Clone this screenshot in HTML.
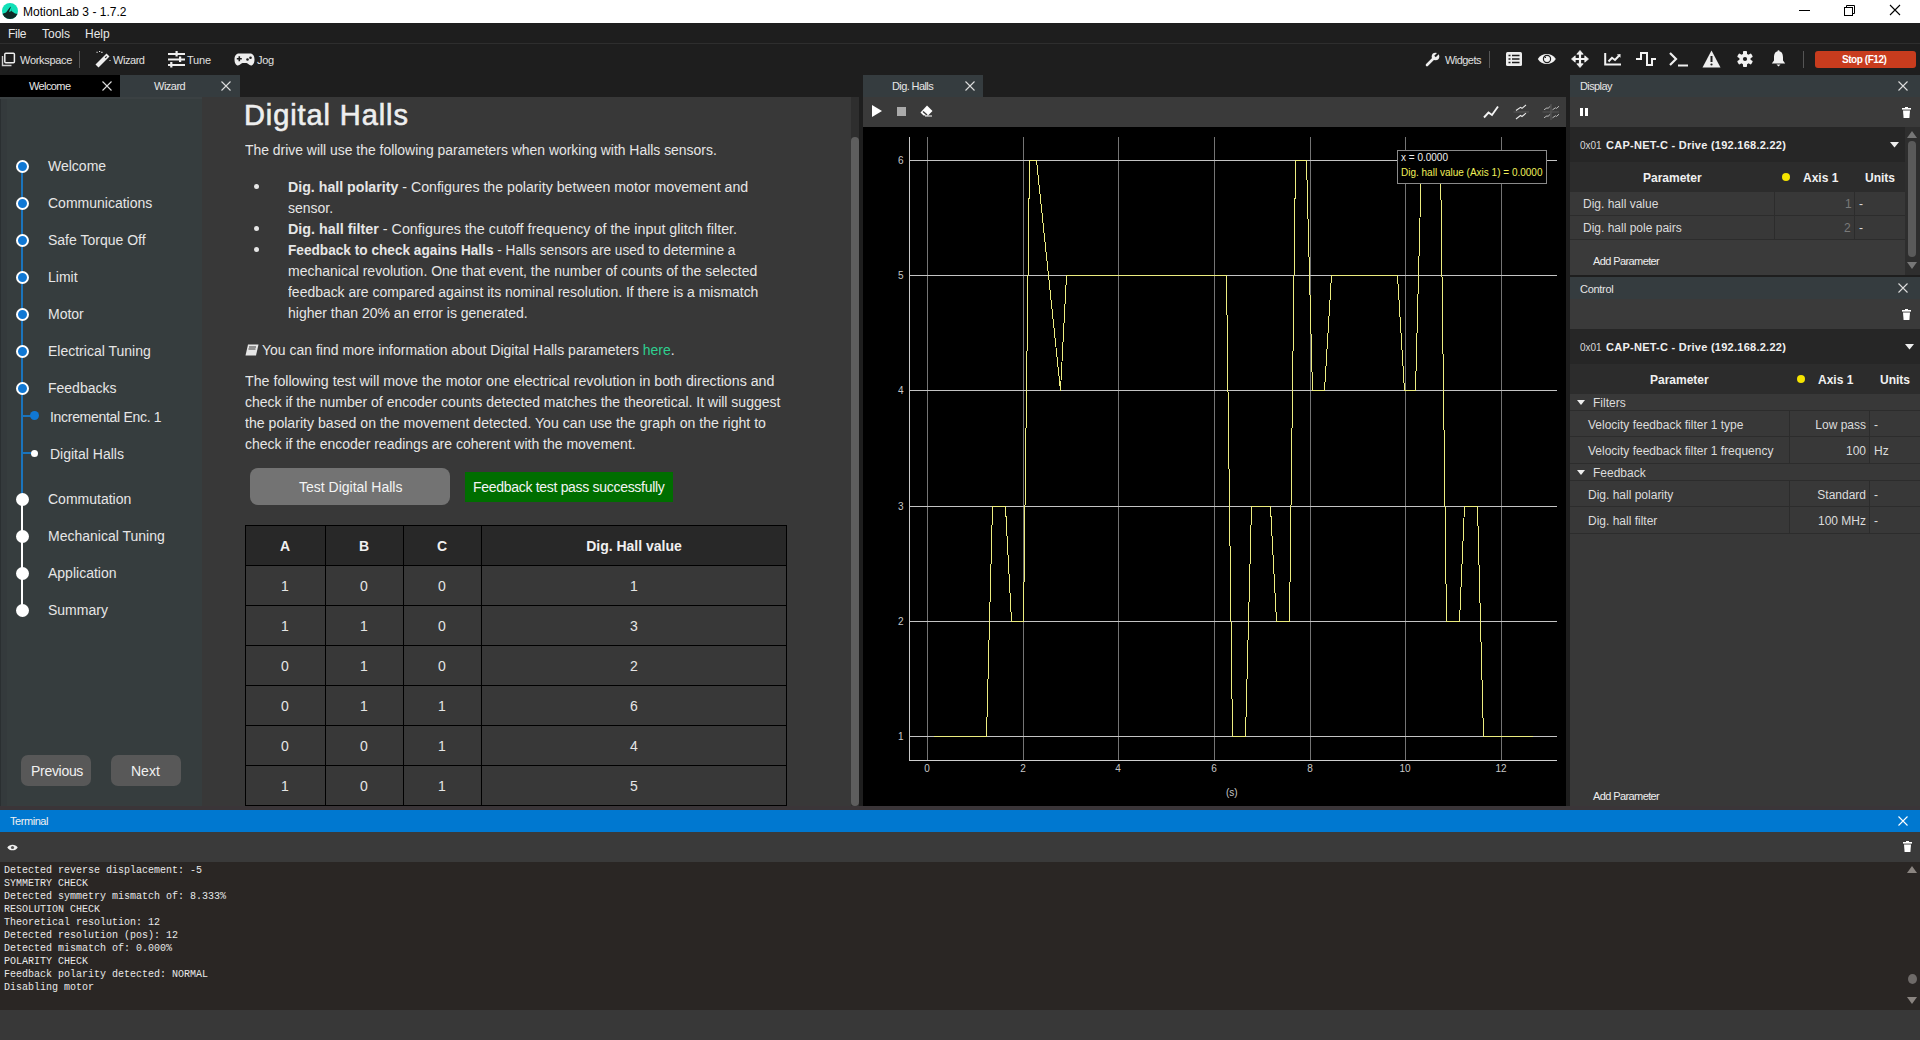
<!DOCTYPE html>
<html><head><meta charset="utf-8">
<style>
*{box-sizing:border-box;margin:0;padding:0}
html,body{width:1920px;height:1040px;overflow:hidden;background:#1e1e1e;font-family:"Liberation Sans",sans-serif;color:#e6e6e6}
.a{position:absolute}
.t{position:absolute;white-space:pre;line-height:1}
svg{position:absolute;overflow:visible}
</style></head><body>
<!-- title bar -->
<div class="a" style="left:0;top:0;width:1920px;height:23px;background:#fff"></div>
<svg style="left:2px;top:3px" width="16" height="16"><defs><clipPath id="lc"><circle cx="8" cy="8" r="8"/></clipPath></defs><circle cx="8" cy="8" r="8" fill="#12e0b8"/><path clip-path="url(#lc)" d="M0 11L4 9.5L8.5 3.5L9.5 8L13 10.5L16 11V16H0Z" fill="#102a26"/><path d="M8.5 4.5L7 9L9.5 8Z" fill="#12e0b8"/></svg>
<div class="t" style="left:23px;top:6px;font-size:12px;color:#000">MotionLab 3 - 1.7.2</div>
<div class="a" style="left:1799px;top:10px;width:11px;height:1px;background:#000"></div>
<svg style="left:1844px;top:5px" width="11" height="11"><rect x="0.5" y="2.5" width="8" height="8" fill="none" stroke="#000"/><path d="M2.5 2.5V0.5H10.5V8.5H8.5" fill="none" stroke="#000"/></svg>
<svg style="left:1890px;top:5px" width="11" height="11"><path d="M0 0L10 10M10 0L0 10" stroke="#000" stroke-width="1.1"/></svg>

<!-- menu bar -->
<div class="a" style="left:0;top:23px;width:1920px;height:20px;background:#1e1e1e"></div>
<div class="a" style="left:0;top:43px;width:1920px;height:1px;background:#2e2e2e"></div>
<div class="t" style="left:8px;top:28px;font-size:12px;color:#e8e8e8;letter-spacing:-0.3px">File</div>
<div class="t" style="left:42px;top:28px;font-size:12px;color:#e8e8e8">Tools</div>
<div class="t" style="left:85px;top:28px;font-size:12px;color:#e8e8e8">Help</div>

<!-- toolbar -->
<div class="a" style="left:0;top:44px;width:1920px;height:31px;background:#1e1e1e"></div>

<!-- toolbar left -->
<svg style="left:1px;top:52px" width="15" height="15"><path d="M1.5 4V13.5H10.5" fill="none" stroke="#cfcfcf" stroke-width="1.4"/><rect x="3.8" y="1.2" width="9.6" height="9.6" rx="1" fill="#1e1e1e" stroke="#eee" stroke-width="1.5"/></svg>
<div class="t" style="left:20px;top:55px;font-size:11px;color:#e0e0e0;letter-spacing:-0.3px">Workspace</div>
<div class="a" style="left:79px;top:51px;width:1px;height:17px;background:#555"></div>
<svg style="left:94px;top:50px" width="18" height="18"><path d="M3 16L14 5" stroke="#eee" stroke-width="4.2"/><path d="M11.2 7.8L12.6 6.4" stroke="#1e1e1e" stroke-width="1.2"/><path d="M2.5 2.2h1.2M5 1.5h1.2M7.3 2.4h1.2M15.5 10.5h1" stroke="#eee" stroke-width="1.1"/></svg>
<div class="t" style="left:113px;top:55px;font-size:11px;color:#e0e0e0;letter-spacing:-0.45px">Wizard</div>
<svg style="left:168px;top:51px" width="18" height="17"><path d="M0 3H17M0 8.5H17M0 14H17" stroke="#eee" stroke-width="1.8"/><rect x="7.5" y="0" width="2.2" height="5.5" fill="#eee"/><rect x="11" y="5.5" width="2.2" height="5.5" fill="#eee"/><rect x="2.2" y="11" width="2.2" height="5.5" fill="#eee"/></svg>
<div class="t" style="left:187px;top:55px;font-size:11px;color:#e0e0e0;letter-spacing:-0.2px">Tune</div>
<svg style="left:234px;top:53px" width="21" height="13"><path d="M5 0.5H16C19 0.5 20.5 3 20.5 6.5C20.5 10 19 12.5 17 12.5C15 12.5 14 10 12.5 10H8.5C7 10 6 12.5 4 12.5C2 12.5 0.5 10 0.5 6.5C0.5 3 2 0.5 5 0.5Z" fill="#eee"/><path d="M2.8 5.8h5M5.3 3.3v5" stroke="#1e1e1e" stroke-width="1.6"/><circle cx="13.5" cy="6.5" r="1.3" fill="#1e1e1e"/><circle cx="16.5" cy="4.8" r="1.3" fill="#1e1e1e"/></svg>
<div class="t" style="left:257px;top:55px;font-size:11px;color:#e0e0e0;letter-spacing:-0.3px">Jog</div>

<!-- toolbar right -->
<svg style="left:1425px;top:52px" width="15" height="15"><path d="M2 13L9 6" stroke="#eee" stroke-width="2.6" stroke-linecap="round"/><circle cx="10.5" cy="4.5" r="3.8" fill="#eee"/><path d="M10 4.5L13.5 1" stroke="#1e1e1e" stroke-width="2.2"/></svg>
<div class="t" style="left:1445px;top:55px;font-size:11px;color:#e0e0e0;letter-spacing:-0.55px">Widgets</div>
<div class="a" style="left:1489px;top:51px;width:1px;height:17px;background:#555"></div>
<svg style="left:1506px;top:52px" width="16" height="14"><rect x="0" y="0" width="16" height="14" rx="1.5" fill="#eee"/><path d="M2.5 3.5h2M6 3.5h7.5M2.5 7h2M6 7h7.5M2.5 10.5h2M6 10.5h7.5" stroke="#1e1e1e" stroke-width="1.5"/></svg>
<svg style="left:1537px;top:52px" width="20" height="14"><path d="M0.8 7C4.5 0.2 15 0.2 18.8 7C15 13.8 4.5 13.8 0.8 7Z" fill="#f2f2f2"/><circle cx="10" cy="7" r="3.6" fill="none" stroke="#1e1e1e" stroke-width="1.2"/><path d="M7.5 4.5L9 6" stroke="#1e1e1e" stroke-width="1"/></svg>
<svg style="left:1571px;top:50px" width="18" height="18"><path d="M9 2V16M2 9H16" stroke="#f2f2f2" stroke-width="2.2"/><path d="M9 0.5L5.8 4.2H12.2ZM9 17.5L5.8 13.8H12.2ZM0.5 9L4.2 5.8V12.2ZM17.5 9L13.8 5.8V12.2Z" fill="#f2f2f2" stroke="#f2f2f2" stroke-width="0.8" stroke-linejoin="round"/></svg>
<svg style="left:1604px;top:52px" width="18" height="14"><path d="M1.2 1V12.6H17" fill="none" stroke="#f2f2f2" stroke-width="2"/><path d="M4.5 9.5L8 5.8L11 8L15 3.8" fill="none" stroke="#f2f2f2" stroke-width="2"/><path d="M16.5 2V5.8L12.8 2.5Z" fill="#f2f2f2"/></svg>
<svg style="left:1636px;top:52px" width="20" height="14"><path d="M0 7H5V1H11V13H16V7H20" fill="none" stroke="#f2f2f2" stroke-width="2"/></svg>
<svg style="left:1669px;top:52px" width="20" height="15"><path d="M1 1L7 7L1 13" fill="none" stroke="#eee" stroke-width="2.2"/><path d="M9 13.5H19" stroke="#eee" stroke-width="2"/></svg>
<svg style="left:1702px;top:50px" width="19" height="18"><path d="M9.5 0.5L18.5 17.5H0.5Z" fill="#eee"/><path d="M9.5 6V12" stroke="#1e1e1e" stroke-width="2"/><circle cx="9.5" cy="14.5" r="1.1" fill="#1e1e1e"/></svg>
<svg style="left:1737px;top:51px" width="16" height="16"><g fill="#f2f2f2"><circle cx="8" cy="8" r="5.6"/><rect x="6" y="0" width="4" height="16" rx="0.8"/><rect x="6" y="0" width="4" height="16" rx="0.8" transform="rotate(60 8 8)"/><rect x="6" y="0" width="4" height="16" rx="0.8" transform="rotate(-60 8 8)"/></g><circle cx="8" cy="8" r="2.1" fill="#1e1e1e"/></svg>
<svg style="left:1771px;top:50px" width="15" height="17"><path d="M7.5 1.2C4 1.2 3 4.2 3 7.5V10.5L0.8 13.5H14.2L12 10.5V7.5C12 4.2 11 1.2 7.5 1.2Z" fill="#f2f2f2"/><circle cx="7.5" cy="1.3" r="1.1" fill="#f2f2f2"/><path d="M5.5 14.5H9.5L7.5 16.6Z" fill="#f2f2f2"/></svg>
<div class="a" style="left:1803px;top:51px;width:1px;height:17px;background:#555"></div>
<div class="a" style="left:1815px;top:51px;width:101px;height:17px;background:#c83c1e;border-radius:3px"></div>
<div class="t" style="left:1842px;top:55px;font-size:10px;font-weight:700;color:#fff;letter-spacing:-0.45px">Stop (F12)</div>

<!-- left tabs -->
<div class="a" style="left:0;top:75px;width:120px;height:22px;background:#000"></div>
<div class="t" style="left:29px;top:81px;font-size:11px;color:#e6e6e6;letter-spacing:-0.6px">Welcome</div>
<svg style="left:102px;top:81px" width="10" height="10"><path d="M0.5 0.5L9.5 9.5M9.5 0.5L0.5 9.5" stroke="#ddd" stroke-width="1.1"/></svg>
<div class="a" style="left:120px;top:75px;width:120px;height:22px;background:#353c3f"></div>
<div class="t" style="left:154px;top:81px;font-size:11px;color:#e6e6e6;letter-spacing:-0.5px">Wizard</div>
<svg style="left:221px;top:81px" width="10" height="10"><path d="M0.5 0.5L9.5 9.5M9.5 0.5L0.5 9.5" stroke="#ddd" stroke-width="1.1"/></svg>

<!-- nav panel -->
<div class="a" style="left:0;top:97px;width:202px;height:709px;background:#363d3e"></div>
<div class="a" style="left:0;top:97px;width:7px;height:709px;background:#343a3c"></div><div class="a" style="left:0;top:97px;width:1px;height:709px;background:#2a2f31"></div><div class="a" style="left:0;top:97px;width:202px;height:2px;background:#3b4143"></div>
<div class="a" style="left:21px;top:166px;width:2px;height:333px;background:#1a74bc"></div>
<div class="a" style="left:21px;top:499px;width:2px;height:111px;background:#fff"></div>
<div class="a" style="left:22px;top:414.5px;width:12px;height:2px;background:#1a74bc"></div>
<div class="a" style="left:22px;top:452px;width:9px;height:2px;background:#1a74bc"></div>
<div class="a" style="left:30px;top:411px;width:9px;height:9px;border-radius:50%;background:#1078d4"></div>
<div class="a" style="left:30.5px;top:449.5px;width:7px;height:7px;border-radius:50%;background:#fff"></div>
<div class="t" style="left:50px;top:410px;font-size:14px;color:#e6e6e6;letter-spacing:-0.3px">Incremental Enc. 1</div>
<div class="t" style="left:50px;top:447px;font-size:14px;color:#e6e6e6">Digital Halls</div>
<div class="a" style="left:15.5px;top:160px;width:13px;height:13px;border-radius:50%;background:#1078d4;border:2.2px solid #fff"></div>
<div class="t" style="left:48px;top:159px;font-size:14px;color:#e6e6e6">Welcome</div>
<div class="a" style="left:15.5px;top:197px;width:13px;height:13px;border-radius:50%;background:#1078d4;border:2.2px solid #fff"></div>
<div class="t" style="left:48px;top:196px;font-size:14px;color:#e6e6e6">Communications</div>
<div class="a" style="left:15.5px;top:234px;width:13px;height:13px;border-radius:50%;background:#1078d4;border:2.2px solid #fff"></div>
<div class="t" style="left:48px;top:233px;font-size:14px;color:#e6e6e6">Safe Torque Off</div>
<div class="a" style="left:15.5px;top:271px;width:13px;height:13px;border-radius:50%;background:#1078d4;border:2.2px solid #fff"></div>
<div class="t" style="left:48px;top:270px;font-size:14px;color:#e6e6e6">Limit</div>
<div class="a" style="left:15.5px;top:308px;width:13px;height:13px;border-radius:50%;background:#1078d4;border:2.2px solid #fff"></div>
<div class="t" style="left:48px;top:307px;font-size:14px;color:#e6e6e6">Motor</div>
<div class="a" style="left:15.5px;top:345px;width:13px;height:13px;border-radius:50%;background:#1078d4;border:2.2px solid #fff"></div>
<div class="t" style="left:48px;top:344px;font-size:14px;color:#e6e6e6">Electrical Tuning</div>
<div class="a" style="left:15.5px;top:382px;width:13px;height:13px;border-radius:50%;background:#1078d4;border:2.2px solid #fff"></div>
<div class="t" style="left:48px;top:381px;font-size:14px;color:#e6e6e6">Feedbacks</div>
<div class="a" style="left:15.5px;top:493px;width:13px;height:13px;border-radius:50%;background:#fff"></div>
<div class="t" style="left:48px;top:492px;font-size:14px;color:#e6e6e6">Commutation</div>
<div class="a" style="left:15.5px;top:530px;width:13px;height:13px;border-radius:50%;background:#fff"></div>
<div class="t" style="left:48px;top:529px;font-size:14px;color:#e6e6e6">Mechanical Tuning</div>
<div class="a" style="left:15.5px;top:567px;width:13px;height:13px;border-radius:50%;background:#fff"></div>
<div class="t" style="left:48px;top:566px;font-size:14px;color:#e6e6e6">Application</div>
<div class="a" style="left:15.5px;top:604px;width:13px;height:13px;border-radius:50%;background:#fff"></div>
<div class="t" style="left:48px;top:603px;font-size:14px;color:#e6e6e6">Summary</div>

<div class="a" style="left:21px;top:755px;width:70px;height:31px;border-radius:7px;background:#585858"></div>
<div class="t" style="left:31px;top:764px;font-size:14px;color:#f0f0f0;letter-spacing:-0.3px">Previous</div>
<div class="a" style="left:111px;top:755px;width:70px;height:31px;border-radius:7px;background:#585858"></div>
<div class="t" style="left:131px;top:764px;font-size:14px;color:#f0f0f0">Next</div>

<!-- content panel -->
<div class="a" style="left:202px;top:97px;width:649px;height:709px;background:#383838"></div>
<div class="a" style="left:851px;top:97px;width:8px;height:709px;background:#2e2e2e"></div>
<div class="a" style="left:851px;top:137px;width:8px;height:669px;border-radius:4px;background:#5e5e5e"></div>
<div class="a" style="left:859px;top:97px;width:4px;height:709px;background:#1e1e1e"></div>
<div class="t" style="left:244px;top:101px;font-size:29px;color:#eeeeee;letter-spacing:0.9px;-webkit-text-stroke:0.6px #eeeeee">Digital Halls</div>
<div class="t" style="left:245px;top:143px;font-size:14px;color:#e6e6e6;transform:scaleX(0.9939);transform-origin:0 0">The drive will use the following parameters when working with Halls sensors.</div>
<div class="t" style="left:288px;top:180px;font-size:14px;color:#e6e6e6;transform:scaleX(1.0128);transform-origin:0 0"><b>Dig. hall polarity</b> - Configures the polarity between motor movement and</div>
<div class="t" style="left:288px;top:201px;font-size:14px;color:#e6e6e6">sensor.</div>
<div class="t" style="left:288px;top:222px;font-size:14px;color:#e6e6e6;transform:scaleX(1.0238);transform-origin:0 0"><b>Dig. hall filter</b> - Configures the cutoff frequency of the input glitch filter.</div>
<div class="t" style="left:288px;top:243px;font-size:14px;color:#e6e6e6;transform:scaleX(0.9745);transform-origin:0 0"><b>Feedback to check agains Halls</b> - Halls sensors are used to determine a</div>
<div class="t" style="left:288px;top:264px;font-size:14px;color:#e6e6e6">mechanical revolution. One that event, the number of counts of the selected</div>
<div class="t" style="left:288px;top:285px;font-size:14px;color:#e6e6e6;transform:scaleX(0.9958);transform-origin:0 0">feedback are compared against its nominal resolution. If there is a mismatch</div>
<div class="t" style="left:288px;top:306px;font-size:14px;color:#e6e6e6">higher than 20% an error is generated.</div>
<div class="a" style="left:254px;top:184px;width:5px;height:5px;border-radius:50%;background:#e6e6e6"></div>
<div class="a" style="left:254px;top:226px;width:5px;height:5px;border-radius:50%;background:#e6e6e6"></div>
<div class="a" style="left:254px;top:247px;width:5px;height:5px;border-radius:50%;background:#e6e6e6"></div>
<svg style="left:245px;top:344px" width="14" height="12"><path d="M3 0.5H13.5L11 11.5H0.5Z" fill="#e6e6e6"/><path d="M4 3H11M3.5 5H10.5" stroke="#383838" stroke-width="1"/></svg>
<div class="t" style="left:262px;top:343px;font-size:14px;color:#e6e6e6">You can find more information about Digital Halls parameters <span style="color:#2ecf8f">here</span>.</div>
<div class="t" style="left:245px;top:374px;font-size:14px;color:#e6e6e6;transform:scaleX(1.0154);transform-origin:0 0">The following test will move the motor one electrical revolution in both directions and</div>
<div class="t" style="left:245px;top:395px;font-size:14px;color:#e6e6e6">check if the number of encoder counts detected matches the theoretical. It will suggest</div>
<div class="t" style="left:245px;top:416px;font-size:14px;color:#e6e6e6;transform:scaleX(1.008);transform-origin:0 0">the polarity based on the movement detected. You can use the graph on the right to</div>
<div class="t" style="left:245px;top:437px;font-size:14px;color:#e6e6e6">check if the encoder readings are coherent with the movement.</div>

<div class="a" style="left:250px;top:468px;width:200px;height:37px;border-radius:8px;background:#737373"></div>
<div class="t" style="left:299px;top:480px;font-size:14px;color:#f4f4f4">Test Digital Halls</div>
<div class="a" style="left:465px;top:472px;width:208px;height:30px;background:#006e00"></div>
<div class="t" style="left:473px;top:480px;font-size:14px;color:#f4f4f4;letter-spacing:-0.3px">Feedback test pass successfully</div>
<!-- table -->
<div class="a" style="left:245px;top:525px;width:542px;height:281px;background:#383838;border:1px solid #000"></div>
<div class="a" style="left:246px;top:526px;width:540px;height:40px;background:#282828"></div>
<div class="a" style="left:325px;top:525px;width:1px;height:281px;background:#000"></div>
<div class="a" style="left:403px;top:525px;width:1px;height:281px;background:#000"></div>
<div class="a" style="left:481px;top:525px;width:1px;height:281px;background:#000"></div>
<div class="a" style="left:245px;top:565px;width:542px;height:1px;background:#000"></div>
<div class="a" style="left:245px;top:605px;width:542px;height:1px;background:#000"></div>
<div class="a" style="left:245px;top:645px;width:542px;height:1px;background:#000"></div>
<div class="a" style="left:245px;top:685px;width:542px;height:1px;background:#000"></div>
<div class="a" style="left:245px;top:725px;width:542px;height:1px;background:#000"></div>
<div class="a" style="left:245px;top:765px;width:542px;height:1px;background:#000"></div>
<div class="t" style="left:135px;width:300px;text-align:center;top:539px;font-size:14px;font-weight:700;color:#f0f0f0">A</div>
<div class="t" style="left:214px;width:300px;text-align:center;top:539px;font-size:14px;font-weight:700;color:#f0f0f0">B</div>
<div class="t" style="left:292px;width:300px;text-align:center;top:539px;font-size:14px;font-weight:700;color:#f0f0f0">C</div>
<div class="t" style="left:484px;width:300px;text-align:center;top:539px;font-size:14px;font-weight:700;color:#f0f0f0">Dig. Hall value</div>
<div class="t" style="left:235px;width:100px;text-align:center;top:579px;font-size:14px;color:#e6e6e6">1</div>
<div class="t" style="left:314px;width:100px;text-align:center;top:579px;font-size:14px;color:#e6e6e6">0</div>
<div class="t" style="left:392px;width:100px;text-align:center;top:579px;font-size:14px;color:#e6e6e6">0</div>
<div class="t" style="left:584px;width:100px;text-align:center;top:579px;font-size:14px;color:#e6e6e6">1</div>
<div class="t" style="left:235px;width:100px;text-align:center;top:619px;font-size:14px;color:#e6e6e6">1</div>
<div class="t" style="left:314px;width:100px;text-align:center;top:619px;font-size:14px;color:#e6e6e6">1</div>
<div class="t" style="left:392px;width:100px;text-align:center;top:619px;font-size:14px;color:#e6e6e6">0</div>
<div class="t" style="left:584px;width:100px;text-align:center;top:619px;font-size:14px;color:#e6e6e6">3</div>
<div class="t" style="left:235px;width:100px;text-align:center;top:659px;font-size:14px;color:#e6e6e6">0</div>
<div class="t" style="left:314px;width:100px;text-align:center;top:659px;font-size:14px;color:#e6e6e6">1</div>
<div class="t" style="left:392px;width:100px;text-align:center;top:659px;font-size:14px;color:#e6e6e6">0</div>
<div class="t" style="left:584px;width:100px;text-align:center;top:659px;font-size:14px;color:#e6e6e6">2</div>
<div class="t" style="left:235px;width:100px;text-align:center;top:699px;font-size:14px;color:#e6e6e6">0</div>
<div class="t" style="left:314px;width:100px;text-align:center;top:699px;font-size:14px;color:#e6e6e6">1</div>
<div class="t" style="left:392px;width:100px;text-align:center;top:699px;font-size:14px;color:#e6e6e6">1</div>
<div class="t" style="left:584px;width:100px;text-align:center;top:699px;font-size:14px;color:#e6e6e6">6</div>
<div class="t" style="left:235px;width:100px;text-align:center;top:739px;font-size:14px;color:#e6e6e6">0</div>
<div class="t" style="left:314px;width:100px;text-align:center;top:739px;font-size:14px;color:#e6e6e6">0</div>
<div class="t" style="left:392px;width:100px;text-align:center;top:739px;font-size:14px;color:#e6e6e6">1</div>
<div class="t" style="left:584px;width:100px;text-align:center;top:739px;font-size:14px;color:#e6e6e6">4</div>
<div class="t" style="left:235px;width:100px;text-align:center;top:779px;font-size:14px;color:#e6e6e6">1</div>
<div class="t" style="left:314px;width:100px;text-align:center;top:779px;font-size:14px;color:#e6e6e6">0</div>
<div class="t" style="left:392px;width:100px;text-align:center;top:779px;font-size:14px;color:#e6e6e6">1</div>
<div class="t" style="left:584px;width:100px;text-align:center;top:779px;font-size:14px;color:#e6e6e6">5</div>

<!-- chart dock -->
<div class="a" style="left:863px;top:75px;width:120px;height:22px;background:#353c3f"></div>
<div class="t" style="left:892px;top:81px;font-size:11px;color:#e6e6e6;letter-spacing:-0.6px">Dig. Halls</div>
<svg style="left:965px;top:81px" width="10" height="10"><path d="M0.5 0.5L9.5 9.5M9.5 0.5L0.5 9.5" stroke="#ddd" stroke-width="1.1"/></svg>
<div class="a" style="left:863px;top:97px;width:703px;height:30px;background:#3a3a3a"></div>
<svg style="left:872px;top:105px" width="10" height="12"><path d="M0 0L10 6L0 12Z" fill="#fff"/></svg>
<div class="a" style="left:897px;top:107px;width:9px;height:9px;background:#aaa"></div>
<svg style="left:920px;top:105px" width="13" height="12"><path d="M7 0.5L12.5 6L8 10.5H3.5L0.5 7.5Z" fill="#fff"/><path d="M3 6.5L7 10" stroke="#3a3a3a" stroke-width="1.5"/><path d="M5 11H12" stroke="#fff" stroke-width="1"/></svg>
<svg style="left:0;top:0" width="1920" height="1040">
<polyline points="1484,117.5 1488.5,112.5 1492,115 1498,106.5" fill="none" stroke="#f4f4f4" stroke-width="1.9"/>
<polyline points="1516,110.5 1520.5,107.3 1522,108.3 1526,105" fill="none" stroke="#e8e8e8" stroke-width="1.1"/>
<polyline points="1516,119 1520.5,115.5 1522,116.5 1526,113.2" fill="none" stroke="#e8e8e8" stroke-width="1.1"/>
<line x1="1513.5" y1="112" x2="1529" y2="112" stroke="#5e5e5e" stroke-width="0.9"/>
<g fill="none" stroke="#b8b8b8" stroke-width="1">
<polyline points="1544,109.8 1547,107.8 1548,108.4 1550.3,106.2"/>
<polyline points="1552.5,109.8 1555.5,107.8 1556.5,108.4 1559,106.2"/>
<polyline points="1544,117.8 1547,115.8 1548,116.4 1550.3,114.2"/>
<polyline points="1552.5,117.8 1555.5,115.8 1556.5,116.4 1559,114.2"/>
</g>
<line x1="1551" y1="104" x2="1551" y2="120" stroke="#606060" stroke-width="0.9"/>
<line x1="1542.5" y1="112" x2="1559" y2="112" stroke="#5a5a5a" stroke-width="0.9"/>
</svg>
<div class="a" style="left:863px;top:127px;width:703px;height:679px;background:#000"></div>
<div class="a" style="left:1566px;top:75px;width:4px;height:731px;background:#1e1e1e"></div>
<svg style="left:0;top:0" width="1920" height="1040" shape-rendering="crispEdges"><line x1="927.5" y1="137" x2="927.5" y2="760" stroke="#747474" stroke-width="1"/><line x1="1023.5" y1="137" x2="1023.5" y2="760" stroke="#747474" stroke-width="1"/><line x1="1118.5" y1="137" x2="1118.5" y2="760" stroke="#747474" stroke-width="1"/><line x1="1214.5" y1="137" x2="1214.5" y2="760" stroke="#747474" stroke-width="1"/><line x1="1310.5" y1="137" x2="1310.5" y2="760" stroke="#747474" stroke-width="1"/><line x1="1405.5" y1="137" x2="1405.5" y2="760" stroke="#747474" stroke-width="1"/><line x1="1501.5" y1="137" x2="1501.5" y2="760" stroke="#747474" stroke-width="1"/><line x1="909" y1="160.5" x2="1557" y2="160.5" stroke="#c4c4c4" stroke-width="1"/><line x1="909" y1="275.5" x2="1557" y2="275.5" stroke="#c4c4c4" stroke-width="1"/><line x1="909" y1="390.5" x2="1557" y2="390.5" stroke="#c4c4c4" stroke-width="1"/><line x1="909" y1="506.5" x2="1557" y2="506.5" stroke="#c4c4c4" stroke-width="1"/><line x1="909" y1="621.5" x2="1557" y2="621.5" stroke="#c4c4c4" stroke-width="1"/><line x1="909" y1="736.5" x2="1557" y2="736.5" stroke="#c4c4c4" stroke-width="1"/><line x1="909.5" y1="137" x2="909.5" y2="761" stroke="#c8c8c8"/><line x1="909" y1="760.5" x2="1557" y2="760.5" stroke="#d0d0d0"/></svg>
<svg style="left:0;top:0" width="1920" height="1040" shape-rendering="crispEdges"><polyline fill="none" stroke="#ecec80" stroke-width="1" points="933.5,736.5 986.5,736.5 992.5,506.5 1005.5,506.5 1011.5,621.5 1023.5,621.5 1029.5,160.5 1036.5,160.5 1060.5,390.5 1066.5,275.5 1226.5,275.5 1232.5,736.5 1245.5,736.5 1251.5,506.5 1270.5,506.5 1276.5,621.5 1289.5,621.5 1295.5,160.5 1306.5,160.5 1312.5,390.5 1324.5,390.5 1331.5,275.5 1397.5,275.5 1404.5,390.5 1415.5,390.5 1421.5,160.5 1440.5,160.5 1446.5,621.5 1459.5,621.5 1464.5,506.5 1477.5,506.5 1483.5,736.5 1532.5,736.5"/></svg>
<div class="t" style="left:898px;top:156px;font-size:10px;color:#c8c8c8">6</div>
<div class="t" style="left:898px;top:271px;font-size:10px;color:#c8c8c8">5</div>
<div class="t" style="left:898px;top:386px;font-size:10px;color:#c8c8c8">4</div>
<div class="t" style="left:898px;top:502px;font-size:10px;color:#c8c8c8">3</div>
<div class="t" style="left:898px;top:617px;font-size:10px;color:#c8c8c8">2</div>
<div class="t" style="left:898px;top:732px;font-size:10px;color:#c8c8c8">1</div>
<div class="t" style="left:907px;width:40px;text-align:center;top:764px;font-size:10px;color:#c8c8c8">0</div>
<div class="t" style="left:1003px;width:40px;text-align:center;top:764px;font-size:10px;color:#c8c8c8">2</div>
<div class="t" style="left:1098px;width:40px;text-align:center;top:764px;font-size:10px;color:#c8c8c8">4</div>
<div class="t" style="left:1194px;width:40px;text-align:center;top:764px;font-size:10px;color:#c8c8c8">6</div>
<div class="t" style="left:1290px;width:40px;text-align:center;top:764px;font-size:10px;color:#c8c8c8">8</div>
<div class="t" style="left:1385px;width:40px;text-align:center;top:764px;font-size:10px;color:#c8c8c8">10</div>
<div class="t" style="left:1481px;width:40px;text-align:center;top:764px;font-size:10px;color:#c8c8c8">12</div>
<div class="t" style="left:1226px;top:788px;font-size:10px;color:#c8c8c8">(s)</div>
<div class="a" style="left:1397px;top:150px;width:150px;height:34px;background:#000;border:1px solid #8a8a8a"></div>
<div class="t" style="left:1401px;top:153px;font-size:10px;color:#f0f0f0">x = 0.0000</div>
<div class="t" style="left:1401px;top:168px;font-size:10px;color:#f0f05a">Dig. hall value (Axis 1) = 0.0000</div>

<!-- right panel: Display -->
<div class="a" style="left:1570px;top:75px;width:350px;height:22px;background:#353c3f"></div>
<div class="t" style="left:1580px;top:81px;font-size:11px;color:#e6e6e6;letter-spacing:-0.6px">Display</div>
<svg style="left:1898px;top:81px" width="10" height="10"><path d="M0.5 0.5L9.5 9.5M9.5 0.5L0.5 9.5" stroke="#ddd" stroke-width="1.1"/></svg>
<div class="a" style="left:1570px;top:97px;width:350px;height:30px;background:#3a3a3a"></div>
<div class="a" style="left:1580px;top:108px;width:3px;height:8px;background:#fff"></div>
<div class="a" style="left:1585px;top:108px;width:3px;height:8px;background:#fff"></div>
<svg style="left:1902px;top:107px" width="9" height="11"><rect x="0" y="1" width="9" height="1.6" fill="#fff"/><rect x="3" y="0" width="3" height="1.5" fill="#fff"/><path d="M1 3.5H8L7.4 11H1.6Z" fill="#fff"/></svg>
<div class="a" style="left:1570px;top:127px;width:335px;height:35px;background:#262626"></div>
<div class="t" style="left:1580px;top:141px;font-size:10px;color:#d8d8d8">0x01</div>
<div class="t" style="left:1606px;top:140px;font-size:11px;font-weight:700;color:#f0f0f0;letter-spacing:0.26px">CAP-NET-C - Drive (192.168.2.22)</div>
<svg style="left:1890px;top:142px" width="9" height="6"><path d="M0 0H9L4.5 5.5Z" fill="#eee"/></svg>
<div class="a" style="left:1570px;top:162px;width:335px;height:30px;background:#2c2c2c"></div>
<div class="t" style="left:1643px;top:172px;font-size:12px;font-weight:700;color:#f0f0f0">Parameter</div>
<div class="a" style="left:1782px;top:173px;width:8px;height:8px;border-radius:50%;background:#f5e400"></div>
<div class="t" style="left:1803px;top:172px;font-size:12px;font-weight:700;color:#f0f0f0">Axis 1</div>
<div class="t" style="left:1865px;top:172px;font-size:12px;font-weight:700;color:#f0f0f0">Units</div>
<div class="a" style="left:1570px;top:192px;width:335px;height:48px;background:#383838"></div>
<div class="a" style="left:1570px;top:215px;width:335px;height:1px;background:#2c2c2c"></div>
<div class="a" style="left:1570px;top:239px;width:335px;height:1px;background:#2c2c2c"></div>
<div class="a" style="left:1774px;top:192px;width:1px;height:48px;background:#2c2c2c"></div>
<div class="a" style="left:1854px;top:192px;width:1px;height:48px;background:#2c2c2c"></div>
<div class="t" style="left:1583px;top:198px;font-size:12px;color:#dcdcdc">Dig. hall value</div>
<div class="t" style="left:1845px;top:198px;font-size:12px;color:#7a7a7a">1</div>
<div class="t" style="left:1859px;top:198px;font-size:12px;color:#dcdcdc">-</div>
<div class="t" style="left:1583px;top:222px;font-size:12px;color:#dcdcdc">Dig. hall pole pairs</div>
<div class="t" style="left:1844px;top:222px;font-size:12px;color:#7a7a7a">2</div>
<div class="t" style="left:1859px;top:222px;font-size:12px;color:#dcdcdc">-</div>
<div class="a" style="left:1570px;top:240px;width:335px;height:35px;background:#3a3a3a"></div>
<div class="t" style="left:1593px;top:256px;font-size:11px;color:#eeeeee;letter-spacing:-0.6px">Add Parameter</div>
<div class="a" style="left:1905px;top:127px;width:15px;height:148px;background:#2e2e2e"></div>
<svg style="left:1907px;top:131px" width="10" height="8"><path d="M0 7H10L5 0Z" fill="#777"/></svg>
<div class="a" style="left:1908px;top:141px;width:8px;height:116px;border-radius:4px;background:#5a5a5a"></div>
<svg style="left:1907px;top:262px" width="10" height="8"><path d="M0 0H10L5 7Z" fill="#777"/></svg>
<div class="a" style="left:1570px;top:275px;width:350px;height:2px;background:#1e1e1e"></div>

<!-- right panel: Control -->
<div class="a" style="left:1570px;top:277px;width:350px;height:22px;background:#353c3f"></div>
<div class="t" style="left:1580px;top:284px;font-size:11px;color:#e6e6e6;letter-spacing:-0.3px">Control</div>
<svg style="left:1898px;top:283px" width="10" height="10"><path d="M0.5 0.5L9.5 9.5M9.5 0.5L0.5 9.5" stroke="#ddd" stroke-width="1.1"/></svg>
<div class="a" style="left:1570px;top:299px;width:350px;height:30px;background:#3a3a3a"></div>
<svg style="left:1902px;top:309px" width="9" height="11"><rect x="0" y="1" width="9" height="1.6" fill="#fff"/><rect x="3" y="0" width="3" height="1.5" fill="#fff"/><path d="M1 3.5H8L7.4 11H1.6Z" fill="#fff"/></svg>
<div class="a" style="left:1570px;top:329px;width:350px;height:35px;background:#262626"></div>
<div class="t" style="left:1580px;top:343px;font-size:10px;color:#d8d8d8">0x01</div>
<div class="t" style="left:1606px;top:342px;font-size:11px;font-weight:700;color:#f0f0f0;letter-spacing:0.26px">CAP-NET-C - Drive (192.168.2.22)</div>
<svg style="left:1905px;top:344px" width="9" height="6"><path d="M0 0H9L4.5 5.5Z" fill="#eee"/></svg>
<div class="a" style="left:1570px;top:364px;width:350px;height:30px;background:#2c2c2c"></div>
<div class="t" style="left:1650px;top:374px;font-size:12px;font-weight:700;color:#f0f0f0">Parameter</div>
<div class="a" style="left:1797px;top:375px;width:8px;height:8px;border-radius:50%;background:#f5e400"></div>
<div class="t" style="left:1818px;top:374px;font-size:12px;font-weight:700;color:#f0f0f0">Axis 1</div>
<div class="t" style="left:1880px;top:374px;font-size:12px;font-weight:700;color:#f0f0f0">Units</div>
<div class="a" style="left:1570px;top:394px;width:350px;height:418px;background:#383838"></div>
<svg style="left:1577px;top:400px" width="8" height="5"><path d="M0 0H8L4 5Z" fill="#eee"/></svg>
<div class="t" style="left:1593px;top:397px;font-size:12px;color:#dcdcdc">Filters</div>
<div class="a" style="left:1570px;top:410px;width:350px;height:1px;background:#2c2c2c"></div>
<div class="t" style="left:1588px;top:419px;font-size:12px;color:#dcdcdc">Velocity feedback filter 1 type</div>
<div class="t" style="left:1700px;width:166px;text-align:right;top:419px;font-size:12px;color:#dcdcdc">Low pass</div>
<div class="t" style="left:1874px;top:419px;font-size:12px;color:#dcdcdc">-</div>
<div class="a" style="left:1789px;top:411px;width:1px;height:26px;background:#2c2c2c"></div>
<div class="a" style="left:1869px;top:411px;width:1px;height:26px;background:#2c2c2c"></div>
<div class="a" style="left:1570px;top:436px;width:350px;height:1px;background:#2c2c2c"></div>
<div class="t" style="left:1588px;top:445px;font-size:12px;color:#dcdcdc">Velocity feedback filter 1 frequency</div>
<div class="t" style="left:1700px;width:166px;text-align:right;top:445px;font-size:12px;color:#dcdcdc">100</div>
<div class="t" style="left:1874px;top:445px;font-size:12px;color:#dcdcdc">Hz</div>
<div class="a" style="left:1789px;top:437px;width:1px;height:27px;background:#2c2c2c"></div>
<div class="a" style="left:1869px;top:437px;width:1px;height:27px;background:#2c2c2c"></div>
<div class="a" style="left:1570px;top:463px;width:350px;height:1px;background:#2c2c2c"></div>
<svg style="left:1577px;top:470px" width="8" height="5"><path d="M0 0H8L4 5Z" fill="#eee"/></svg>
<div class="t" style="left:1593px;top:467px;font-size:12px;color:#dcdcdc">Feedback</div>
<div class="a" style="left:1570px;top:480px;width:350px;height:1px;background:#2c2c2c"></div>
<div class="t" style="left:1588px;top:489px;font-size:12px;color:#dcdcdc">Dig. hall polarity</div>
<div class="t" style="left:1700px;width:166px;text-align:right;top:489px;font-size:12px;color:#dcdcdc">Standard</div>
<div class="t" style="left:1874px;top:489px;font-size:12px;color:#dcdcdc">-</div>
<div class="a" style="left:1789px;top:481px;width:1px;height:26px;background:#2c2c2c"></div>
<div class="a" style="left:1869px;top:481px;width:1px;height:26px;background:#2c2c2c"></div>
<div class="a" style="left:1570px;top:506px;width:350px;height:1px;background:#2c2c2c"></div>
<div class="t" style="left:1588px;top:515px;font-size:12px;color:#dcdcdc">Dig. hall filter</div>
<div class="t" style="left:1700px;width:166px;text-align:right;top:515px;font-size:12px;color:#dcdcdc">100 MHz</div>
<div class="t" style="left:1874px;top:515px;font-size:12px;color:#dcdcdc">-</div>
<div class="a" style="left:1789px;top:507px;width:1px;height:27px;background:#2c2c2c"></div>
<div class="a" style="left:1869px;top:507px;width:1px;height:27px;background:#2c2c2c"></div>
<div class="a" style="left:1570px;top:533px;width:350px;height:1px;background:#2c2c2c"></div>
<div class="t" style="left:1593px;top:791px;font-size:11px;color:#eeeeee;letter-spacing:-0.6px">Add Parameter</div>

<!-- terminal -->
<div class="a" style="left:0;top:806px;width:1920px;height:4px;background:#3a3538"></div>
<div class="a" style="left:0;top:810px;width:1920px;height:22px;background:#0078d0"></div>
<div class="t" style="left:10px;top:816px;font-size:11px;color:#f0f0f0;letter-spacing:-0.45px">Terminal</div>
<svg style="left:1898px;top:816px" width="10" height="10"><path d="M0.5 0.5L9.5 9.5M9.5 0.5L0.5 9.5" stroke="#fff" stroke-width="1.1"/></svg>
<div class="a" style="left:0;top:832px;width:1920px;height:30px;background:#3a3a3a"></div>
<svg style="left:7px;top:844px" width="11" height="7"><path d="M0.3 3.5C2.5 -0.3 8.5 -0.3 10.7 3.5C8.5 7.3 2.5 7.3 0.3 3.5Z" fill="#f0f0f0"/><circle cx="5.5" cy="3.5" r="1.6" fill="#555"/></svg>
<svg style="left:1903px;top:841px" width="9" height="11"><rect x="0" y="1" width="9" height="1.6" fill="#fff"/><rect x="3" y="0" width="3" height="1.5" fill="#fff"/><path d="M1 3.5H8L7.4 11H1.6Z" fill="#fff"/></svg>
<div class="a" style="left:0;top:862px;width:1920px;height:148px;background:#2a2624"></div>
<div class="t" style="left:4px;top:866px;font-family:'Liberation Mono',monospace;font-size:10px;color:#e8e8e8">Detected reverse displacement: -5</div>
<div class="t" style="left:4px;top:879px;font-family:'Liberation Mono',monospace;font-size:10px;color:#e8e8e8">SYMMETRY CHECK</div>
<div class="t" style="left:4px;top:892px;font-family:'Liberation Mono',monospace;font-size:10px;color:#e8e8e8">Detected symmetry mismatch of: 8.333%</div>
<div class="t" style="left:4px;top:905px;font-family:'Liberation Mono',monospace;font-size:10px;color:#e8e8e8">RESOLUTION CHECK</div>
<div class="t" style="left:4px;top:918px;font-family:'Liberation Mono',monospace;font-size:10px;color:#e8e8e8">Theoretical resolution: 12</div>
<div class="t" style="left:4px;top:931px;font-family:'Liberation Mono',monospace;font-size:10px;color:#e8e8e8">Detected resolution (pos): 12</div>
<div class="t" style="left:4px;top:944px;font-family:'Liberation Mono',monospace;font-size:10px;color:#e8e8e8">Detected mismatch of: 0.000%</div>
<div class="t" style="left:4px;top:957px;font-family:'Liberation Mono',monospace;font-size:10px;color:#e8e8e8">POLARITY CHECK</div>
<div class="t" style="left:4px;top:970px;font-family:'Liberation Mono',monospace;font-size:10px;color:#e8e8e8">Feedback polarity detected: NORMAL</div>
<div class="t" style="left:4px;top:983px;font-family:'Liberation Mono',monospace;font-size:10px;color:#e8e8e8">Disabling motor</div>
<svg style="left:1907px;top:866px" width="10" height="8"><path d="M0 7H10L5 0Z" fill="#8a8480"/></svg>
<div class="a" style="left:1908px;top:974px;width:9px;height:10px;border-radius:50%;background:#6e6a68"></div>
<svg style="left:1907px;top:997px" width="10" height="8"><path d="M0 0H10L5 7Z" fill="#8a8480"/></svg>
<div class="a" style="left:0;top:1010px;width:1920px;height:30px;background:#383838"></div>
</body></html>
